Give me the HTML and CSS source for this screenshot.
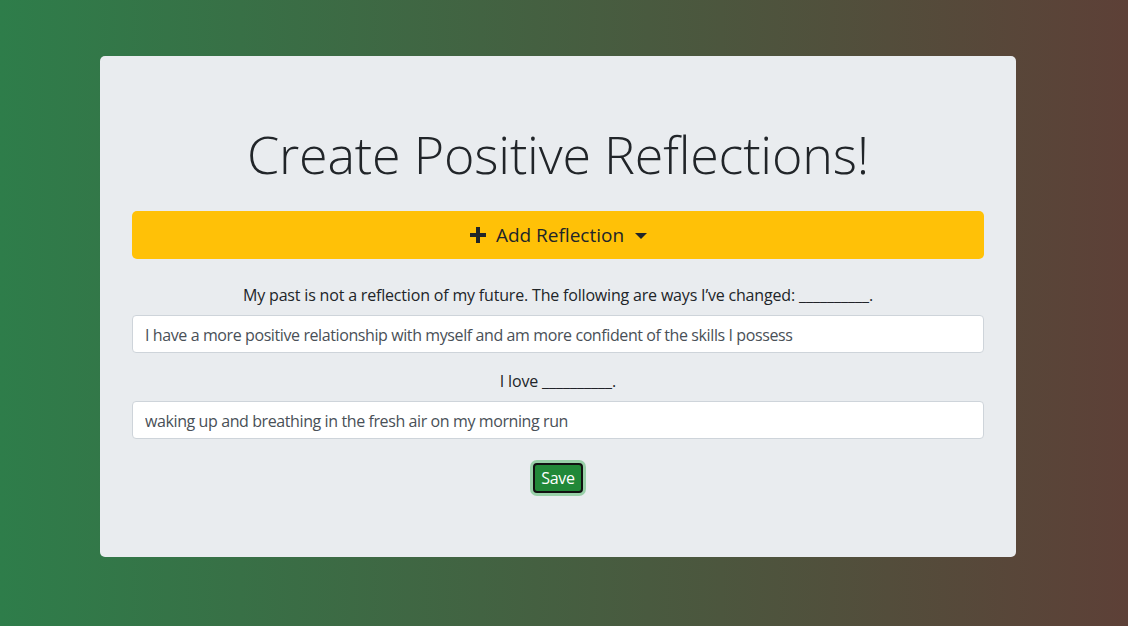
FILE: index.html
```html
<!DOCTYPE html>
<html lang="en">
<head>
<meta charset="utf-8">
<title>Create Positive Reflections!</title>
<link rel="stylesheet" href="styles.css">
</head>
<body>
<main class="page">
  <section class="jumbotron">
    <h1 class="title">Create Positive Reflections!</h1>
    <button class="add-btn" type="button">
      <svg class="plus" viewBox="0 0 18 18" width="18" height="18" aria-hidden="true"><path d="M7 1h4v6h6v4h-6v6H7v-6H1V7h6z" fill="#212529"/></svg>
      <span>Add Reflection</span>
      <span class="caret"></span>
    </button>
    <form class="form">
      <div class="group">
        <label class="label" for="r1">My past is not a reflection of my future. The following are ways I’ve changed: <span class="blank">__________</span>.</label>
        <input class="control" id="r1" type="text" value="I have a more positive relationship with myself and am more confident of the skills I possess">
      </div>
      <div class="group">
        <label class="label" for="r2">I love <span class="blank">__________</span>.</label>
        <input class="control" id="r2" type="text" value="waking up and breathing in the fresh air on my morning run">
      </div>
      <div class="actions">
        <button class="save" type="button">Save</button>
      </div>
    </form>
  </section>
</main>
</body>
</html>
```
FILE: styles.css
```css
* { box-sizing: border-box; }
html, body { height: 100%; }
body {
  margin: 0;
  background: linear-gradient(to right, #2e7d4a, #5d4037);
  font-family: "Open Sans", "Noto Sans", sans-serif;
  color: #212529;
  overflow: hidden;
}
.page {
  padding: 56px 112px 0 100px;
}
.jumbotron {
  background: #e9ecef;
  border-radius: 5px;
  padding: 64px 32px 64px;
  display: flex;
  flex-direction: column;
}
.title {
  margin: 0 0 24px;
  font-size: 52px;
  font-weight: 300;
  line-height: 67px;
  text-align: center;
  letter-spacing: -0.18px;
}
.add-btn {
  height: 48px;
  border: 0;
  border-radius: 5px;
  background: #ffc107;
  color: #212529;
  font-family: inherit;
  font-size: 19px;
  display: flex;
  align-items: center;
  justify-content: center;
  padding: 0 16px;
  letter-spacing: 0;
}
.plus { margin-right: 9px; }
.caret {
  width: 0; height: 0;
  border-left: 6px solid transparent;
  border-right: 6px solid transparent;
  border-top: 6px solid #212529;
  margin-left: 11px;
  margin-top: 1px;
}
.form { margin-top: 24px; }
.group {
  display: flex;
  flex-direction: column;
  margin-bottom: 16px;
}
.label {
  text-align: center;
  font-size: 16px;
  line-height: 24px;
  margin-bottom: 8px;
  letter-spacing: -0.18px;
}
.blank { letter-spacing: 0; }
.control {
  height: 38px;
  border: 1px solid #ced4da;
  border-radius: 4px;
  background: #fff;
  padding: 6px 12px 5px;
  font-family: inherit;
  font-size: 16px;
  color: #495057;
  letter-spacing: -0.4px;
}
.actions {
  display: flex;
  justify-content: center;
  padding-top: 8px;
}
.save {
  height: 30px;
  padding: 0 6px;
  border: 2px solid #111;
  border-radius: 4px;
  background: #218838;
  color: #fff;
  font-family: inherit;
  font-size: 16px;
  box-shadow: 0 0 0 3px rgba(72, 180, 97, 0.5);
  letter-spacing: -0.3px;
}
```
